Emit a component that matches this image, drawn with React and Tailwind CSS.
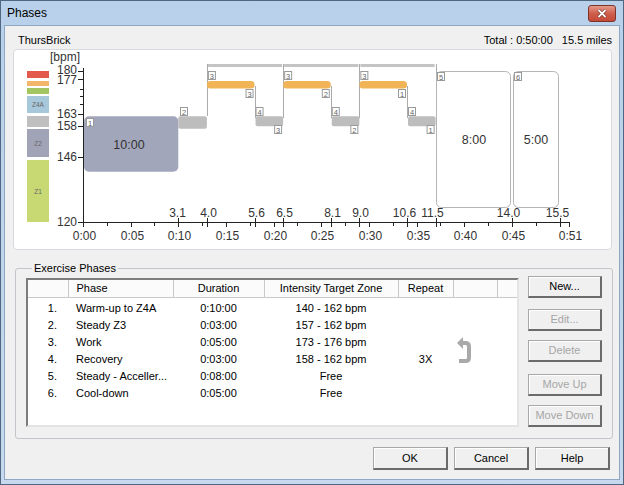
import React from 'react';

const X = (t) => 83 + t * 9.53;
const Y = (b) => 222 - (b - 120) * 2.517;

const yTicks = [
  { v: 180, label: '180' },
  { v: 177, label: '177' },
  { v: 173 },
  { v: 170 },
  { v: 167 },
  { v: 163, label: '163' },
  { v: 158, label: '158' },
  { v: 146, label: '146' },
  { v: 120, label: '120' },
];

const zones = [
  { y: 71, h: 7, fill: '#e35a4c' },
  { y: 81, h: 5, fill: '#f2b56a' },
  { y: 88, h: 6, fill: '#a3c662' },
  { y: 96, h: 17, fill: '#a7c7da', label: 'Z4A' },
  { y: 116, h: 11, fill: '#bfbfbf' },
  { y: 129, h: 28, fill: '#a1a4b7', label: 'Z2' },
  { y: 160, h: 62, fill: '#c8d873', label: 'Z1' },
];

// [label, minute, label offset]
const distances = [
  ['3.1', 10, -2], ['4.0', 13, 0], ['5.6', 18, 0], ['6.5', 21, 0], ['8.1', 26, 0],
  ['9.0', 29, 0], ['10.6', 34, -4], ['11.5', 37, -5], ['14.0', 45, -5], ['15.5', 50, -4],
];

const phases = [
  ['1.', 'Warm-up to Z4A', '0:10:00', '140 - 162 bpm', ''],
  ['2.', 'Steady Z3', '0:03:00', '157 - 162 bpm', ''],
  ['3.', 'Work', '0:05:00', '173 - 176 bpm', ''],
  ['4.', 'Recovery', '0:03:00', '158 - 162 bpm', '3X'],
  ['5.', 'Steady - Acceller...', '0:08:00', 'Free', ''],
  ['6.', 'Cool-down', '0:05:00', 'Free', ''],
];

function Tag({ x, y, n }) {
  return (
    <g>
      <rect x={x + 0.5} y={y + 0.5} width="7" height="8" fill="#fff" stroke="#9a9a9a" />
      <text x={x + 4} y={y + 7.5} fontSize="7.5" fill="#666" textAnchor="middle">{n}</text>
    </g>
  );
}

function Chart() {
  const repeats = [0, 1, 2];
  return (
    <svg width="597" height="199" viewBox="14 50 597 199" className="block font-['Liberation_Sans',Arial,sans-serif]">
      <text x="50" y="61" fontSize="12" fill="#333">[bpm]</text>

      {zones.map((z, i) => (
        <g key={i}>
          <rect x="27" y={z.y} width="22" height={z.h} fill={z.fill} />
          {z.label && (
            <text x="38" y={z.y + z.h / 2 + 2.5} fontSize="6.5" fill="#666" textAnchor="middle">{z.label}</text>
          )}
        </g>
      ))}

      {/* y axis */}
      <line x1="83.5" y1="68" x2="83.5" y2="223" stroke="#222" />
      {yTicks.map((t) => (
        <g key={t.v}>
          <line x1={t.label ? 78 : 80} y1={Math.round(Y(t.v)) + 0.5} x2="83" y2={Math.round(Y(t.v)) + 0.5} stroke="#222" />
          {t.label && (
            <text x="77" y={Y(t.v) + 4 + (t.v === 180 ? -1 : 0) + (t.v === 177 ? 1 : 0)} fontSize="12" fill="#333" textAnchor="end">{t.label}</text>
          )}
        </g>
      ))}

      {/* x axis */}
      <line x1="83" y1="222.5" x2="570" y2="222.5" stroke="#222" />
      {Array.from({ length: 11 }, (_, k) => {
        const t = k === 10 ? 51 : k * 5;
        const x = Math.round(X(t)) + 0.5;
        return (
          <g key={k}>
            <line x1={x} y1="222" x2={x} y2="227" stroke="#222" />
            <text x={x + 1} y="240" fontSize="12" fill="#333" textAnchor="middle">
              {`0:${String(t).padStart(2, '0')}`}
            </text>
          </g>
        );
      })}
      {Array.from({ length: 10 }, (_, k) => {
        const x = Math.round(X(k * 5 + 2.5)) + 0.5;
        return <line key={k} x1={x} y1="222" x2={x} y2="226" stroke="#222" />;
      })}
      {distances.map(([d, t, off]) => {
        const x = Math.round(X(t)) + 0.5;
        return (
          <g key={d}>
            <line x1={x} y1="218" x2={x} y2="227" stroke="#222" />
            <text x={x + 1 + off} y="217" fontSize="12" fill="#333" textAnchor="middle">{d}</text>
          </g>
        );
      })}

      {/* phase 1 & 2 */}
      <rect x="84" y={Y(162)} width={X(10) - 84} height={Y(140) - Y(162)} rx="5" fill="#a2a6ba" />
      <text x="129" y="149" fontSize="12.5" fill="#333" textAnchor="middle">10:00</text>
      <Tag x={86} y={118} n="1" />
      <rect x={X(10)} y={Y(162)} width={X(13) - X(10)} height={Y(157) - Y(162)} rx="2" fill="#bdbdbd" />
      <Tag x={180} y={107} n="2" />

      {/* repeated work / recovery */}
      {repeats.map((i) => {
        const ws = X(13 + 8 * i);
        const we = X(18 + 8 * i);
        const re = X(21 + 8 * i);
        const left = Math.round(ws) + 0.5;
        const mid = Math.round(we) + 0.5;
        const right = Math.round(re) + 0.5;
        return (
          <g key={i}>
            <rect x={ws + 1} y="64" width={re - ws - 2} height="3" fill="#c4c4c4" />
            <line x1={left} y1="64" x2={left} y2="116" stroke="#ababab" />
            <line x1={mid} y1="86" x2={mid} y2="118" stroke="#ababab" />
            <line x1={right} y1="64" x2={right} y2="118" stroke="#ababab" />
            <rect x={ws} y={Y(176)} width={we - ws} height={Y(173) - Y(176)} rx="3.5" fill="#f1b457" />
            <rect x={we + 1} y={Y(162)} width={re - we - 1} height={Y(158) - Y(162)} rx="2" fill="#bdbdbd" />
            <Tag x={ws + 1} y={71} n="3" />
            <Tag x={we - 9} y={89} n={String(3 - i)} />
            <Tag x={we + 1} y={107} n="4" />
            <Tag x={re - 9} y={125} n={String(3 - i)} />
          </g>
        );
      })}

      {/* free phases */}
      <rect x="436.5" y="71.5" width="74" height="136" rx="5" fill="#fff" stroke="#b5b5b5" />
      <text x="474" y="144" fontSize="12.5" fill="#333" textAnchor="middle">8:00</text>
      <Tag x={437} y={72} n="5" />
      <rect x="513.5" y="71.5" width="45" height="136" rx="5" fill="#fff" stroke="#b5b5b5" />
      <text x="536" y="144" fontSize="12.5" fill="#333" textAnchor="middle">5:00</text>
      <Tag x={514} y={72} n="6" />
    </svg>
  );
}

function RepeatArrow() {
  return (
    <svg width="17" height="30" viewBox="0 0 17 30" className="block">
      <path d="M6 7 H9.5 Q13 7 13 10.5 V21.5 Q13 25 9.5 25 H3" fill="none" stroke="#a9a9a9" strokeWidth="4" />
      <path d="M1 7 L7 1 L7 13 Z" fill="#a9a9a9" />
    </svg>
  );
}

function Btn({ children, disabled, className = '' }) {
  return (
    <button
      className={`h-[22px] bg-[#f0f0f0] border-t border-l border-[#a8a8a8] border-r-2 border-b-2 border-r-[#6b6b6b] border-b-[#6b6b6b] shadow-[inset_1px_1px_0_#fff] text-[11px] leading-none ${disabled ? 'text-[#a6a6a6]' : 'text-black'} ${className}`}
    >
      {children}
    </button>
  );
}

export default function App() {
  return (
    <div className="w-[624px] h-[485px] flex flex-col overflow-hidden border border-[#4f6781] bg-gradient-to-b from-[#b8d0ea] to-[#c6d9ee] font-['Liberation_Sans',Arial,sans-serif] text-[11px] text-black">
      {/* title bar */}
      <div className="h-[24px] shrink-0 flex items-center justify-between pl-[6px] pr-[7px]">
        <span className="text-[12px]">Phases</span>
        <div className="w-[28px] h-[17px] rounded-[3px] border border-[#7d3328] bg-gradient-to-b from-[#e49a8b] via-[#cf5e4c] to-[#c44a38] flex items-center justify-center">
          <svg width="10" height="9" viewBox="0 0 10 9">
            <path d="M1.5 1 L8.5 8 M8.5 1 L1.5 8" stroke="#5a1f18" strokeWidth="3" />
            <path d="M1.5 1 L8.5 8 M8.5 1 L1.5 8" stroke="#fff" strokeWidth="1.8" />
          </svg>
        </div>
      </div>

      {/* client area */}
      <div className="flex-1 mx-[3px] mb-[4px] bg-[#f0f0f0] border border-[#8ea7c3] flex flex-col">
        <div className="mt-[7px] h-[14px] pl-[13px] pr-[7px] flex items-center justify-between">
          <span>ThursBrick</span>
          <div className="flex gap-[9px]">
            <span>Total : 0:50:00</span>
            <span>15.5 miles</span>
          </div>
        </div>

        <div className="mt-[2px] ml-[8px] w-[599px] h-[201px] bg-white border border-[#d6dadf] rounded-[4px] overflow-hidden">
          <Chart />
        </div>

        <fieldset className="mt-[12px] ml-[10px] w-[598px] h-[177px] border border-[#c2c6ca] rounded-[3px] px-[10px] pt-[1px]">
          <legend className="ml-[6px] px-[2px] leading-[13px]">Exercise Phases</legend>
          <div className="flex gap-[9px]">
            <div className="mt-[2px] w-[493px] h-[149px] bg-white border-2 border-t-[#7c7c7c] border-l-[#7c7c7c] border-r-[#e4e4e4] border-b-[#e4e4e4]">
              <table className="w-[489px] table-fixed border-collapse">
                <colgroup>
                  <col className="w-[40px]" />
                  <col className="w-[105px]" />
                  <col className="w-[91px]" />
                  <col className="w-[134px]" />
                  <col className="w-[55px]" />
                  <col className="w-[44px]" />
                  <col className="w-[20px]" />
                </colgroup>
                <thead>
                  <tr className="h-[17px] bg-[#fbfbfb]">
                    <th className="border-r border-b border-[#c9c9c9] font-normal"></th>
                    <th className="border-r border-b border-[#c9c9c9] font-normal text-left pl-[8px]">Phase</th>
                    <th className="border-r border-b border-[#c9c9c9] font-normal">Duration</th>
                    <th className="border-r border-b border-[#c9c9c9] font-normal">Intensity Target Zone</th>
                    <th className="border-r border-b border-[#c9c9c9] font-normal">Repeat</th>
                    <th className="border-r border-b border-[#c9c9c9] font-normal"></th>
                    <th className="border-b border-[#c9c9c9] font-normal"></th>
                  </tr>
                </thead>
                <tbody>
                  <tr className="h-[3px]"><td colSpan={7}></td></tr>
                  {phases.map(([n, name, dur, zone, rep], i) => (
                    <tr key={n} className="h-[17px]">
                      <td className="text-right pr-[11px]">{n}</td>
                      <td className="pl-[8px] whitespace-nowrap">{name}</td>
                      <td className="text-center">{dur}</td>
                      <td className="text-center">{zone}</td>
                      <td className="text-center">{rep}</td>
                      {i === 2 && (
                        <td rowSpan={2} className="align-middle pl-[3px]">
                          <RepeatArrow />
                        </td>
                      )}
                      {i !== 2 && i !== 3 && <td></td>}
                      <td></td>
                    </tr>
                  ))}
                </tbody>
              </table>
            </div>

            <div className="w-[74px] flex flex-col">
              <Btn>New...</Btn>
              <Btn disabled className="mt-[11px]">Edit...</Btn>
              <Btn disabled className="mt-[9px]">Delete</Btn>
              <Btn disabled className="mt-[12px]">Move Up</Btn>
              <Btn disabled className="mt-[9px]">Move Down</Btn>
            </div>
          </div>
        </fieldset>

        <div className="mt-[8px] pr-[9px] flex justify-end gap-[6px]">
          <Btn className="w-[75px] h-[23px]">OK</Btn>
          <Btn className="w-[75px] h-[23px]">Cancel</Btn>
          <Btn className="w-[75px] h-[23px]">Help</Btn>
        </div>
      </div>
    </div>
  );
}
